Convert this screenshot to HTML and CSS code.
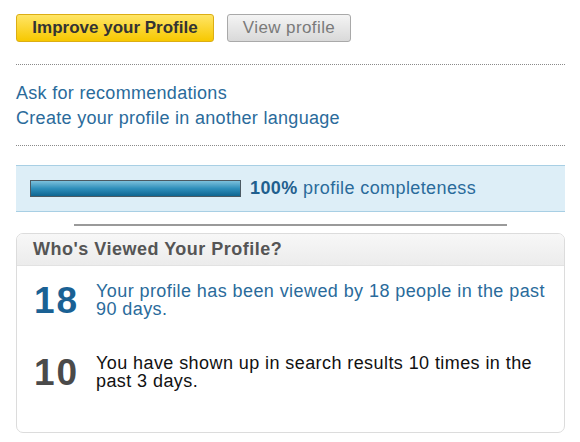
FILE: index.html
```html
<!DOCTYPE html>
<html>
<head>
<meta charset="utf-8">
<link rel="stylesheet" href="styles.css">
</head>
<body>
<div class="page">
  <div class="actions">
    <span class="btn btn-primary">Improve your Profile</span>
    <span class="btn btn-secondary">View profile</span>
  </div>
  <div class="links">
    <a class="link">Ask for recommendations</a>
    <a class="link">Create your profile in another language</a>
  </div>
  <div class="completeness">
    <div class="bar"><div class="bar-fill" style="width:100%"></div></div>
    <div class="completeness-text"><strong>100%</strong> profile completeness</div>
  </div>
  <div class="divider"></div>
  <div class="card">
    <div class="card-head">Who's Viewed Your Profile?</div>
    <div class="stat stat-views">
      <div class="stat-num">18</div>
      <div class="stat-text">Your profile has been viewed by 18 people in the past 90 days.</div>
    </div>
    <div class="stat stat-search">
      <div class="stat-num">10</div>
      <div class="stat-text">You have shown up in search results 10 times in the past 3 days.</div>
    </div>
  </div>
</div>
</body>
</html>
```
FILE: styles.css
```css
html, body { margin: 0; padding: 0; background: #fff; }
body { font-family: "Liberation Sans", Arial, sans-serif; }
.page { width: 549px; padding: 14px 0 0 16px; }

.actions { display: flex; gap: 13px; padding-bottom: 22px; border-bottom: 1px dotted #8a8a8a; }
.btn {
  display: inline-flex; align-items: center; justify-content: center;
  height: 26px; border-radius: 3px; font-size: 17px; box-sizing: content-box;
}
.btn-primary {
  width: 196px; font-weight: bold; color: #333;
  background: linear-gradient(#ffe566, #f7c800);
  border: 1px solid #dcae14;
}
.btn-secondary {
  width: 122px; color: #7a7a7a; letter-spacing: 0.4px;
  background: linear-gradient(#f4f4f4, #d9d9d9);
  border: 1px solid #a9a9a9;
}

.links { display: flex; flex-direction: column; padding: 16px 0 14px; border-bottom: 1px dotted #8a8a8a; }
.link { font-size: 18px; letter-spacing: 0.3px; line-height: 25px; color: #2a6b9b; }

.completeness {
  margin-top: 19px; height: 45px; display: flex; align-items: center; gap: 9px;
  background: #ddeef7; border-top: 1px solid #a8cfe4; border-bottom: 1px solid #a8cfe4;
  padding-left: 14px;
}
.bar { width: 209px; height: 15px; border: 1px solid #4c5a63; background: #ddd; }
.bar-fill { height: 100%; background: linear-gradient(#7cc0dc, #2f8fbb 50%, #0f6590); }
.completeness-text { font-size: 18px; letter-spacing: 0.4px; color: #2a6b9b; }
.completeness-text strong { color: #1f5f8e; }

.divider { margin: 12px auto 0; width: 433px; border-top: 2px solid #9a9a9a; height: 0; }

.card {
  margin-top: 7px; height: 198px; border: 1px solid #dcdcdc; border-radius: 7px; overflow: hidden;
}
.card-head {
  height: 31px; line-height: 31px; padding-left: 16px; font-size: 18px; letter-spacing: 0.5px; font-weight: bold; color: #555;
  background: linear-gradient(#f7f7f7, #ececec); border-bottom: 1px solid #e2e2e2;
}
.stat { display: flex; align-items: flex-start; gap: 12px; padding: 0 14px 0 17px; }
.stat-views { margin-top: 15px; }
.stat-search { margin-top: 32px; }
.stat-num { font-size: 37px; letter-spacing: 2px; font-weight: bold; line-height: 40px; width: 50px; flex: none; }
.stat-text { font-size: 18px; letter-spacing: 0.42px; line-height: 18px; padding-top: 1px; }
.stat-views .stat-num { color: #1a6194; }
.stat-views .stat-text { color: #2a6b9b; }
.stat-search .stat-num { color: #4a4a4a; }
.stat-search .stat-text { color: #111; }
```
